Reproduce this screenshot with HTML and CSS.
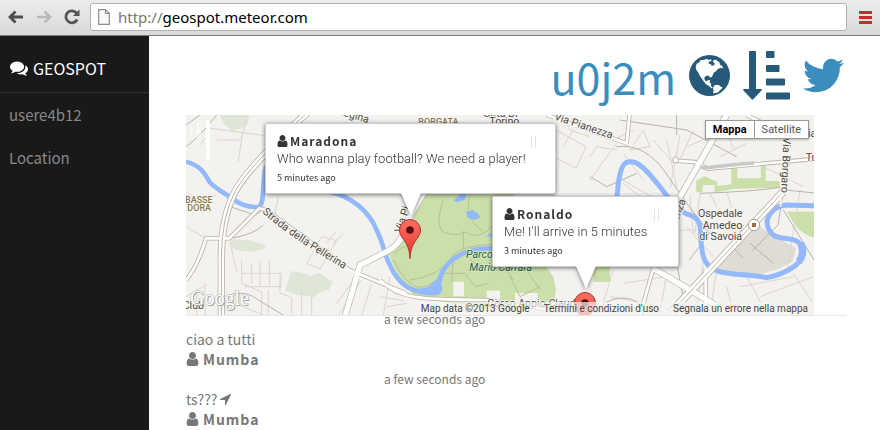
FILE: index.html
```html
<!DOCTYPE html>
<html lang="en">
<head>
<meta charset="utf-8">
<title>Geospot</title>
<link rel="stylesheet" href="styles.css">
</head>
<body>
<svg class="sprite" aria-hidden="true">
  <symbol id="user" viewBox="192 128 1408 1536"><path d="M1536 1399q0 109-62.500 187t-150.500 78h-854q-88 0-150.500-78t-62.500-187q0-85 8.500-160.500t31.500-152 58.500-131 94-89 134.500-34.500q131 128 313 128t313-128q76 0 134.500 34.500t94 89 58.500 131 31.500 152 8.500 160.500zm-256-887q0 159-112.500 271.500t-271.500 112.500-271.500-112.500-112.500-271.500 112.500-271.500 271.500-112.500 271.500 112.500 112.500 271.500z"/></symbol>
  <symbol id="pin" viewBox="0 0 22 40">
    <path d="M11 39.500C10.500 30 8 25 4.500 20.500 2 17 .5 14.500 .5 11a10.500 10.500 0 0 1 21 0c0 3.500-1.500 6-4 9.500C14 25 11.500 30 11 39.500z" fill="url(#pinFill)" stroke="#b0322c"/>
    <circle cx="11" cy="11" r="3.800" fill="#5b0f0c"/>
  </symbol>
  <defs><linearGradient id="pinFill" x1="0" y1="0" x2="0" y2="1"><stop offset="0" stop-color="#fb7064"/><stop offset="1" stop-color="#e6352b"/></linearGradient></defs>
</svg>

<header class="toolbar">
  <button class="tool" aria-label="Back"><svg width="16" height="14" viewBox="0 0 16 14"><path d="M7.500 1.500L2 7l5.500 5.500M2 7h13" fill="none" stroke="#4d4d4d" stroke-width="2.800"/></svg></button>
  <button class="tool" aria-label="Forward"><svg width="16" height="14" viewBox="0 0 16 14"><path d="M8.500 1.500L14 7l-5.500 5.500M14 7H1" fill="none" stroke="#b9b9b9" stroke-width="2.600"/></svg></button>
  <button class="tool" aria-label="Reload"><svg width="16" height="16" viewBox="0 0 16 16"><path d="M13.200 10.500A6 6 0 1 1 12.500 4" fill="none" stroke="#555" stroke-width="2.800"/><path d="M15.500 .5v6.500H9z" fill="#555"/></svg></button>
  <label class="address">
    <svg width="12" height="16" viewBox="0 0 12 16"><path d="M.7 .7h6.800l3.800 3.800v10.800H.7zM7.500 .7v3.800h3.800" fill="#fafafa" stroke="#8c8c8c" stroke-width="1.200"/></svg>
    <span class="url" role="textbox" aria-label="Address"><span class="scheme">http://</span>geospot.meteor.com</span>
  </label>
  <button class="tool menu" aria-label="Menu"><svg width="13" height="13" viewBox="0 0 13 13"><path d="M0 1.500h13M0 6.500h13M0 11.500h13" stroke="#c32f2f" stroke-width="3"/></svg></button>
</header>

<div class="page">
  <nav class="sidebar">
    <a class="brand" href="#"><svg width="18" height="16" viewBox="0 128 1792 1536" fill="#fff"><path d="M1408 768q0 139-94 257t-256.500 186.500-353.500 68.500q-86 0-176-16-124 88-278 128-36 9-86 16h-3q-11 0-20.500-8t-11.500-21q-1-3-1-6.500t.5-6.500 2-6l2.500-5 3.500-5.500 4-5 4.500-5 4-4.500q5-6 23-25t26-29.500 22.500-29 25-38.500 20.500-44q-124-72-195-177t-71-224q0-139 94-257t256.500-186.500 353.500-68.500 353.500 68.500 256.500 186.500 94 257zm384 256q0 120-71 224.500t-195 176.500q10 24 20.500 44t25 38.500 22.500 29 26 29.500 23 25q1 1 4 4.500t4.500 5 4 5 3.500 5.500l2.500 5 2 6 .5 6.500-1 6.500q-3 14-13 22t-22 7q-50-7-86-16-154-40-278-128-90 16-176 16-271 0-472-132 58 4 88 4 161 0 309-45t264-129q125-92 192-212t67-254q0-77-23-152 129 71 204 178t75 230z"/></svg>GEOSPOT</a>
    <a class="item" href="#">usere4b12</a>
    <a class="item" href="#">Location</a>
  </nav>

  <main class="content">
    <div class="room">
      <a class="room-name" href="#">u0j2m</a>
      <button class="action" aria-label="World">
        <svg width="41" height="41" viewBox="0 0 123 123"><circle cx="61.500" cy="61.500" r="61.500" fill="#27597a"/><path fill="#fff" d="M20 36l3-10 8-4 3-6 12-2 8-3 4 4 8-2 2 4-8 3-1 6 6 1 3 5 8-1 1-6-5-4 1-5 8-2 5 5 5 2 2 8 7 4 2 7-8-1-8 3-4 6-8 5-3 8-3 6-6 0-2-5-9 0-5 6 1 8 5 3 6-4 5 1-1 7 4 2 0 8 6 6-5 1-7-7-9-5-6-8-7-10-6-8-3-8-7-9zM75 92l6-3 10 2 4 4 5 1-1 5-6 4-4 6-8 3-9 1 2-8-2-6z"/></svg>
      </button>
      <button class="action sort" aria-label="Sort">
        <svg width="47" height="49" viewBox="0 0 47 49" fill="#27597a"><path d="M6 1q0-1 1-1h5q1 0 1 1v37h5q1.500 0 .5 1.500l-8 8.500q-1 1-2 0L.5 39.500Q-.5 38 1 38h5zM23 1q0-1 1-1h6.500q1 0 1 1v5q0 1-1 1H24q-1 0-1-1zM23 15q0-1 1-1h11.500q1 0 1 1v5q0 1-1 1H24q-1 0-1-1zM23 28.500q0-1 1-1h17q1 0 1 1v5q0 1-1 1H24q-1 0-1-1zM23 42.500q0-1 1-1h22q1 0 1 1v5q0 1-1 1H24q-1 0-1-1z"/></svg>
      </button>
      <button class="action" aria-label="Twitter">
        <svg width="41" height="35" viewBox="108 256 1576 1280" fill="#3b8dbd"><path d="M1684 408q-67 98-162 167 1 14 1 42 0 130-38 259.500t-115.500 248.500-184.500 210.500-258 146-323 54.500q-271 0-496-145 35 4 78 4 225 0 401-138-105-2-188-64.500t-114-159.500q33 5 61 5 43 0 85-11-112-23-185.500-111.500t-73.500-205.500v-4q68 38 146 41-66-44-105-115t-39-154q0-88 44-163 121 149 294.500 238.500t371.500 99.500q-8-38-8-74 0-134 94.500-228.500t228.500-94.500q140 0 236 102 109-21 205-78-37 115-142 178 93-10 186-50z"/></svg>
      </button>
    </div>

    <section class="map-row">
      <div class="map">
        <svg class="tiles" viewBox="18 15 1884 600" preserveAspectRatio="xMinYMin slice">
          <rect x="18" y="15" width="3000" height="1200" fill="#f3f2ef"/>
          <g fill="#dfe6d7">
            <path d="M120 15h88l-4 25-18 14-30 9-24-20zM155 388l48 2 52 14v12l-40 10-50-6-15-18zM335 483l40 7 15 8 30-10 38 28-12 24-26 6-20 16-60-10-25-10z"/>
          </g>
          <g fill="#cadfaa">
            <path d="M700 240H1000V420L1090 460 1120 500 1128 540 1120 580 1080 598 960 600 820 582 700 556 650 490 625 430 660 390z"/>
            <path d="M1240 470h50v46h-50zM1548 214l24-16 40 18v12l42-5V170h18v35h70v-40l15-8v56h42v20l-140 4-50 10h-60z"/>
            <path d="M1822 305h90v80q-60-10-90-80z"/>
          </g>
          <path d="M1740 348l30 24 78 42-10 40-44 24-60 16-70 4-30-10-38-18 30-44 80-70z" fill="#dfdbd5"/>
          <path d="M820 515h32v44h-32zM920 542h40v54h-40zM1005 549h68v50h-68z" fill="#f3f2ef"/>
          <path d="M1568 225h36v26h-36zM1614 172h36v36h-36zM1678 160h64v42h-64z" fill="#f3f2ef"/>
          <g fill="none" stroke="#dad6cd" stroke-width="3">
            <path d="M200 25l-15 60-10 70M90 55l168 22M60 105l15-20M110 90h60q15 0 18-20M18 270l90-14M18 350l60 36M150 395l20 90M18 560l60-35M185 450v70l60 25v70M185 490h118v40h-110M215 460v60M240 455v75M268 450v80M300 490v60l30 10M265 540v75M150 575l100 40M50 545v70M75 520v95M295 260l-12 60M380 460l45-80 45 12-50 85zM440 398l30-35M460 400l30-30M335 560v50M365 540v75M395 560v55"/>
            <path d="M530 500l-60 80M545 510l-70 105M575 520l-30 95M630 500l-20 115M600 560l70 12M620 590l60-10M1128 60l90 50-30 65-100-50zM1150 110l30-50M1230 140l20-30 60 10M1310 100l-80 110M1330 130l60 80M1360 60l-60 30M1390 60l-40 60 60-10zM1310 200l140 80M1420 90l60 70M1460 90l30 140M1500 75l-30 160M1330 220l100 80M1340 330l-60 130M1385 360l-40 110M1420 350l-60 120M1330 400l90 10M1310 440l120 20M1540 60l-40 90M1640 60l-120 50M1620 15l40 100M1700 100l-80 40M1750 170l120 60"/>
            <path d="M1530 260l10 110M1560 250l-15 120M1590 250l20 40M1640 245l15 50M1600 440l-80-90M1570 450l-20 150M1610 480l-20 130M1640 530l20 80M1680 530l160-30M1700 500l60 110M1740 560l160-60M1840 490l60 90M1300 480l-40 130M1330 520l130-20M1460 490l-20 120M1480 360h70M1350 330l100 20M1290 560l160 30M1520 540l120 60M1830 150l-40 120M1860 240l-40 250M1150 15l20 45 60 20"/>
          </g>
          <g fill="none" stroke="#bab4a5" stroke-width="3">
            <path d="M60 15L18 45M110 15Q60 80 18 110M1230 200l50 30 90-40M1308 110q90-10 150 80t130 180l-60 80M1320 30l200 30 150 80M1490 15v60M1560 250q160-5 240-18M1810 245l-16 100-80 80M1815 240l100 10M1810 300l92 150M1690 345l-30 70 30 30M1710 400l70 60M1490 460l30 155M1270 580q60-30 100-5l20 40M150 290l75 25 30-20M150 385q70-10 100-40M130 560q60-20 90 0t90 55"/>
          </g>
          <g fill="none" stroke="#b6bf97" stroke-width="3">
            <path d="M645 430q20-25 50-20M640 450q40 80 80 82t90-70M790 270q-30 90 10 100t50-5q50 30 90-20M850 365v50M690 510q90-10 130-75 20-30 160-35M820 440l-5 75M790 490h65l30 40 40-10M870 450q40 30 70 20t60 40M990 500l30 60 60-30M870 255q-20 70 40 110M1040 480l40 60"/>
          </g>
          <path d="M18 155C60 165 75 190 88 215 110 240 145 255 160 268 180 285 210 292 238 292 255 270 245 230 256 175 300 90 370 200 450 246 520 260 570 310 590 360 615 410 610 430 632 470 660 530 700 548 745 545 795 545 760 500 810 456 850 420 900 408 980 418" fill="none" stroke="#93b9fb" stroke-width="14"/>
          <path d="M690 535q30 28 85 20 20-10 6-38l8-22-22 14-22 22-35 6z" fill="#93b9fb"/>
          <path d="M820 272l22-20h20l-8 18-24 7zM858 306l20-6 15 10 8 12-18 8-20-6zM918 378l18-10h20v18z" fill="#93b9fb"/>
          <path d="M1310 270C1315 220 1318 170 1338 158 1370 145 1400 180 1438 228 1470 270 1490 298 1520 312 1562 320 1562 350 1562 380 1565 430 1570 470 1610 482 1650 498 1710 490 1760 503 1800 495 1865 470 1870 430 1865 365 1800 400 1775 370 1745 335 1770 290 1820 285L1920 288" fill="none" stroke="#93b9fb" stroke-width="15"/>
          <path d="M1862 400q14 30-6 56" fill="none" stroke="#93b9fb" stroke-width="22"/>
          <g fill="none" stroke="#bab4a5">
            <path d="M124 615V440Q125 320 165 245T385 5" stroke-width="22"/>
            <path d="M18 510q35-40 60-125h70l90-90 20 5 250 180 170 70M600 510q40 40 100 50t220 10l190 30h170M1420 475L1380 615M1484 152l60 4 40 20 330-30M1577 475v140M1100 15l240 85 10-100M1700 15l60 30" stroke-width="13"/>
            <path d="M495 620l45-155 80-40q50-25 60-90l60-100M1495 270L1640 15M1420 475l220 130" stroke-width="20"/>
            <path d="M1470 610l340-365" stroke-width="24"/>
          </g>
          <g fill="none" stroke="#fff">
            <path d="M124 615V440Q125 320 165 245T385 5" stroke-width="17"/>
            <path d="M18 510q35-40 60-125h70l90-90 20 5 250 180 170 70M600 510q40 40 100 50t220 10l190 30h170M1420 475L1380 615M1484 152l60 4 40 20 330-30M1577 475v140M1100 15l240 85 10-100M1700 15l60 30" stroke-width="8"/>
            <path d="M495 620l45-155 80-40q50-25 60-90l60-100M1495 270L1640 15M1420 475l220 130" stroke-width="16"/>
            <path d="M1470 610l340-365" stroke-width="19"/>
          </g>
          <path d="M124 615V440Q125 320 165 245T385 5M1470 610l340-365" fill="none" stroke="#bab4a5" stroke-width="3"/>
          <path d="M1560 170l12 4 110-12 40-3" fill="none" stroke="#c8c8c8" stroke-width="11"/>
          <circle cx="1487" cy="150" r="9" fill="#fff" stroke="#bab4a5" stroke-width="3"/>
          <circle cx="1722" cy="345" r="17" fill="#fff" stroke="#aaa39a" stroke-width="3"/>
          <path d="M1716 339h12v12h-12z" fill="#9b6844"/>
          <path d="M78 30h12v120H78z" fill="#fff"/>
          <path d="M35 45v35M53 35v50M60 50v30" stroke="#fff" stroke-width="3"/>
          <g class="labels">
            <g class="district"><text x="15" y="279">BASSE</text><text x="22" y="303">DORA</text><text x="715" y="44">BORGATA</text></g>
            <text x="910" y="21">Città Di</text><text x="928" y="46">Torino</text>
            <path id="strada" d="M246 308Q340 392 560 516" fill="none"/>
            <text><textPath href="#strada">Strada della Pellerina</textPath></text>
            <path id="regina" d="M470 12L640 62" fill="none"/><text><textPath href="#regina">Regina</textPath></text>
            <path id="pianezza" d="M1121 28L1360 108" fill="none"/><text><textPath href="#pianezza">Via Pianezza</textPath></text>
            <path id="borgaro" d="M1810 82L1802 290" fill="none"/><text><textPath href="#borgaro">Via Borgaro</textPath></text>
            <path id="pi" d="M664 370L700 262" fill="none"/><text><textPath href="#pi">Via Pi</textPath></text>
            <path id="enza" d="M1494 335L1530 240" fill="none"/><text><textPath href="#enza">enza</textPath></text>
            <text x="8" y="597">Club</text>
            <text x="1554" y="320">Ospedale</text><text x="1568" y="356">Amedeo</text><text x="1558" y="391">di Savoia</text>
            <text x="1877" y="152">Tu</text><text x="1884" y="82">ia</text>
            <g class="park"><text x="858" y="445">Parco</text><text x="868" y="482">Mario Carrara</text></g>
            <text x="922" y="592">Corso Appio Claudio</text>
          </g>
          <g class="google"><text class="google-shadow" x="33" y="588">Google</text><text x="30" y="584">Google</text></g>
        </svg>
        <svg class="pin pin-a"><use href="#pin"/></svg>
        <svg class="pin pin-b"><use href="#pin"/></svg>

        <article class="bubble bubble-a">
          <h2><svg class="person"><use href="#user"/></svg>Maradona</h2>
          <p>Who wanna play football? We need a player!</p>
          <time>5 minutes ago</time>
          <i class="close"></i>
        </article>
        <article class="bubble bubble-b">
          <h2><svg class="person"><use href="#user"/></svg>Ronaldo</h2>
          <p>Me! I'll arrive in 5 minutes</p>
          <time>3 minutes ago</time>
          <i class="close"></i>
        </article>

        <div class="types"><button class="on">Mappa</button><button>Satellite</button></div>
        <footer class="credits"><span>Map data ©2013 Google</span><a href="#">Termini e condizioni d'uso</a><a href="#">Segnala un errore nella mappa</a></footer>
      </div>
    </section>

    <ul class="messages">
      <li><time>a few seconds ago</time><p>ciao a tutti</p><strong><svg class="person"><use href="#user"/></svg>Mumba</strong></li>
      <li><time>a few seconds ago</time><p>ts??? <svg width="11" height="11" viewBox="192 256 1410 1410" fill="#777"><path d="M1593 349l-640 1280q-17 35-57 35-5 0-15-2-22-5-35.500-22.500t-13.500-39.500v-576h-576q-22 0-39.500-13.500t-22.500-35.500 4-42 29-30l1280-640q13-7 29-7 27 0 45 19 15 14 18.500 34.500t-6.500 39.500z"/></svg></p><strong><svg class="person"><use href="#user"/></svg>Mumba</strong></li>
    </ul>
  </main>
</div>
</body>
</html>
```
FILE: styles.css
```css
* { box-sizing: border-box; }
body {
  margin: 0;
  height: 100vh;
  display: flex;
  flex-direction: column;
  overflow: hidden;
  background: #fff;
  color: #777;
  font-family: "Noto Sans CJK SC", "Noto Sans", sans-serif;
}
h2, p, ul { margin: 0; padding: 0; }
a { color: inherit; text-decoration: none; }
button { border: 0; padding: 0; background: none; color: inherit; font: inherit; }
svg { display: block; flex: none; }
.sprite { position: absolute; width: 0; height: 0; }

.toolbar {
  flex: none;
  height: 36px;
  padding: 3px 8px 4px;
  display: flex;
  align-items: center;
  gap: 12px;
  background: linear-gradient(#ececec, #d9d9d9);
  border-bottom: 1px solid #777;
}
.address {
  flex: 1;
  height: 28px;
  margin-left: -2px;
  padding: 0 7px;
  display: flex;
  align-items: center;
  gap: 8px;
  background: #fff;
  border: 1px solid #b0b0b0;
  border-radius: 3px;
}
.url { color: #000; font: 15px/26px "Noto Sans", sans-serif; }
.scheme { color: #777; }

.page { flex: 1; min-height: 0; display: flex; }
.sidebar {
  flex: none;
  width: 149px;
  background: #191919;
  color: #888;
  font-size: 15px;
}
.brand {
  height: 57px;
  padding: 8px 10px 0;
  display: flex;
  align-items: center;
  gap: 5px;
  border-bottom: 1px solid #333;
  color: #fff;
  font-size: 16px;
}
.item { display: block; padding: 0 9px; line-height: 43px; }

.content { flex: 1; min-width: 0; padding: 0 34px 0 37px; }
.room {
  height: 79px;
  padding-right: 2px;
  display: flex;
  align-items: center;
  justify-content: flex-end;
  gap: 13px;
}
.room-name { color: #3b8dbd; font-size: 43px; line-height: 64px; }

.map-row { border-bottom: 1px solid #e7e7e7; position: relative; z-index: 1; }
.map { position: relative; margin-right: 32px; height: 200px; overflow: hidden; }
.tiles { width: 100%; height: 100%; }
.labels {
  font: 32px Roboto, sans-serif;
  fill: #4d4940;
  stroke: #f8f7f4;
  stroke-width: 5px;
  paint-order: stroke;
}
.district { fill: #8b7752; font-size: 27px; font-weight: 500; }
.park { fill: #28603e; stroke: #dcebc6; font-style: italic; }
.google { font: 60px "Liberation Serif", serif; fill: #fff; stroke: #bbb; stroke-width: 3px; paint-order: stroke; }
.google-shadow { fill: #999; stroke: none; }

.pin { position: absolute; width: 22px; height: 40px; }
.pin-a { left: 213px; top: 104px; }
.pin-b { left: 388px; top: 177px; }
.bubble {
  position: absolute;
  height: 71px;
  padding: 8px 11px;
  background: #fff;
  border: 1px solid #ccc;
  border-radius: 2px;
  filter: drop-shadow(0 1px 2px #0008);
  color: #333;
  white-space: nowrap;
}
.bubble::after {
  content: "";
  position: absolute;
  top: 69px;
  width: 20px;
  height: 23px;
  background: #fff;
  clip-path: polygon(0 0, 100% 0, 50% 100%);
}
.bubble-a { left: 79px; top: 8px; width: 291px; }
.bubble-a::after { left: 135px; }
.bubble-b { left: 306px; top: 81px; width: 187px; }
.bubble-b::after { left: 83px; }
.bubble h2 {
  display: flex;
  align-items: center;
  gap: 2px;
  font-size: 12px;
  line-height: 18px;
  letter-spacing: 1px;
}
.bubble p { font: 300 13px/18px Roboto, sans-serif; }
.bubble time { display: block; font-size: 9px; line-height: 20px; }
.person { width: 11px; height: 12px; fill: currentColor; }
.close {
  position: absolute;
  right: 19px;
  top: 12px;
  width: 5px;
  height: 12px;
  border: solid #e2e2e2;
  border-width: 0 1px;
}
.types {
  position: absolute;
  top: 5px;
  right: 5px;
  display: flex;
  background: #fff;
  border: 1px solid #999;
  box-shadow: 0 1px 2px #0004;
  font: 11px/17px Roboto, sans-serif;
  color: #555;
}
.types button { padding: 0 7px; }
.types .on { color: #000; font-weight: 700; border-right: 1px solid #999; }
.credits {
  position: absolute;
  right: 0;
  bottom: 0;
  padding: 0 6px;
  display: flex;
  gap: 14px;
  background: #f5f5f5b3;
  color: #444;
  font: 10px/13px Roboto, sans-serif;
}

.messages { list-style: none; margin-top: -7px; }
.messages li { height: 60px; }
.messages time { display: block; padding-left: 198px; font-size: 12px; line-height: 20px; }
.messages p { display: flex; align-items: center; gap: 3px; font-size: 14px; line-height: 20px; }
.messages strong { display: flex; align-items: center; gap: 4px; font-size: 14px; line-height: 20px; letter-spacing: 1px; }
.messages .person { width: 13px; height: 14px; }
```
